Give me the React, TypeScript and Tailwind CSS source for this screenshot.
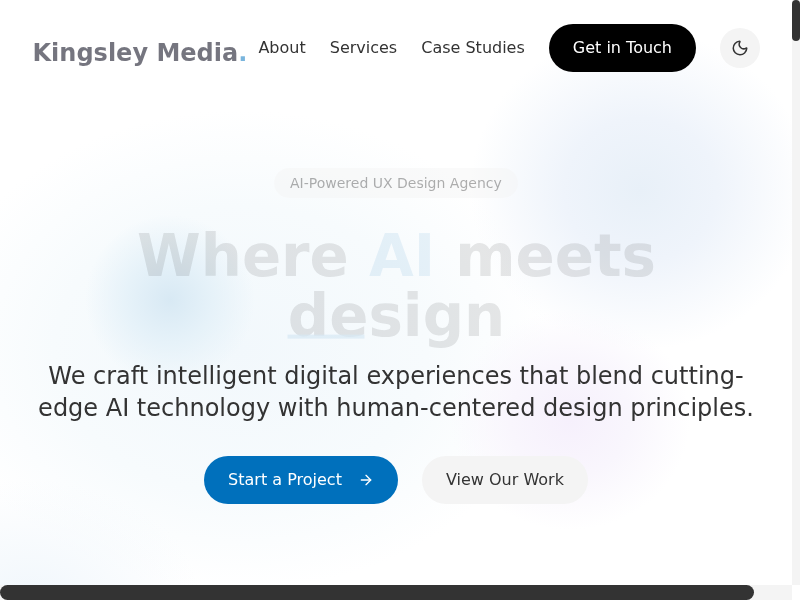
import { ArrowRight, Moon } from "lucide-react";

export default function App() {
  return (
    <div className="grid h-screen w-screen grid-cols-[1fr_8px] grid-rows-[1fr_15px] overflow-hidden bg-white font-['DejaVu_Sans',sans-serif] text-[#333]">
      <div className="relative overflow-hidden">
        {/* Background blobs */}
        <div className="absolute left-[470px] top-[30px] w-[340px] h-[320px] rounded-full bg-[radial-gradient(closest-side,#e8f0f8,#eff4fb_45%,#ffffff00)]" />
        <div className="absolute left-[-70px] top-[110px] w-[620px] h-[480px] rounded-full bg-[radial-gradient(closest-side,#f2f8fc,#f7fbfd_60%,#ffffff00)]" />
        <div className="absolute left-[85px] top-[215px] w-[170px] h-[170px] rounded-full bg-[radial-gradient(closest-side,#d8e9f4,#e6f2f9_50%,#ffffff00)]" />
        <div className="absolute left-[450px] top-[310px] w-[240px] h-[220px] rounded-full bg-[radial-gradient(closest-side,#f6f0fc,#f9f6fd_50%,#ffffff00)]" />
        <div className="absolute left-[-140px] top-[480px] w-[340px] h-[240px] rounded-full bg-[radial-gradient(closest-side,#f1f7fc,#ffffff00)]" />

        <div className="relative will-change-transform">
          {/* Header */}
          <header className="flex items-center justify-between px-8 py-6">
            <a href="#" className="pt-[7px] text-2xl font-bold text-[#191a2a] opacity-60 translate-x-[0.5px] translate-y-[0.5px] will-change-transform whitespace-nowrap">
              Kingsley Media<span className="text-[#2184c6]">.</span>
            </a>
            <nav className="flex items-center gap-6 whitespace-nowrap">
              <a href="#">About</a>
              <a href="#">Services</a>
              <a href="#">Case Studies</a>
              <button className="rounded-full bg-black px-6 py-3 text-white">Get in Touch</button>
              <button className="flex h-10 w-10 items-center justify-center rounded-full bg-[#f4f4f4]" aria-label="Toggle theme">
                <Moon size={18} />
              </button>
            </nav>
          </header>

          {/* Hero */}
          <section className="flex flex-col items-center px-8 pt-[72px] text-center">
            <span className="mb-[26px] rounded-full bg-[#f4f4f4] px-4 py-[5px] text-sm opacity-40 will-change-transform">AI-Powered UX Design Agency</span>
            <h1 className="mb-4 text-[57.8px] leading-[60px] font-bold opacity-[.12] translate-x-[0.5px] translate-y-[1.6px] will-change-transform">
              Where <span className="text-[#0070bc] opacity-70">AI</span> meets{" "}
              <span className="relative">
                design
                <span className="absolute left-0 bottom-[11px] h-1 w-[77px] bg-[#0070bc] opacity-70" />
              </span>
            </h1>
            <p className="text-2xl">
              We craft intelligent digital experiences that blend cutting-edge AI technology with human-centered design principles.
            </p>
            <div className="mt-8 flex items-center gap-6">
              <button className="flex items-center gap-4 rounded-full bg-[#0070bc] px-6 py-3 text-white">
                Start a Project
                <ArrowRight size={16} />
              </button>
              <button className="rounded-full bg-[#f4f4f4] px-6 py-3">View Our Work</button>
            </div>
          </section>
        </div>
      </div>

      {/* Scrollbars */}
      <div className="bg-[#f4f4f4]">
        <div className="h-[41px] rounded-full bg-[#333]" />
      </div>
      <div className="bg-[#f4f4f4]">
        <div className="h-full w-[754px] rounded-full bg-[#333]" />
      </div>
      <div className="bg-white" />
    </div>
  );
}
